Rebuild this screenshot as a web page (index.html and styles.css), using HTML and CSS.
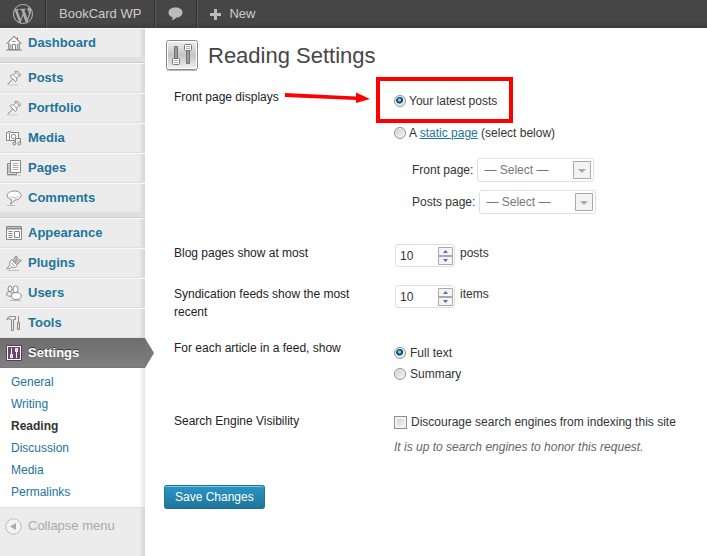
FILE: index.html
```html
<!DOCTYPE html>
<html lang="en">
<head>
<meta charset="utf-8">
<title>Reading Settings</title>
<link rel="stylesheet" href="styles.css">
</head>
<body>
<header class="bar">
  <a class="bar-item bar-logo" href="#" aria-label="WordPress"><svg width="20" height="20" viewBox="0 0 20 20" fill="#aaa"><path d="M20 10c0-5.51-4.49-10-10-10C4.48 0 0 4.49 0 10c0 5.52 4.48 10 10 10 5.51 0 10-4.48 10-10zM7.78 15.37L4.37 6.22c.55-.02 1.17-.08 1.17-.08.5-.06.44-1.13-.06-1.11 0 0-1.45.11-2.37.11-.18 0-.37 0-.58-.01C4.12 2.69 6.87 1.11 10 1.11c2.33 0 4.45.87 6.05 2.34-.68-.11-1.65.39-1.65 1.58 0 .74.45 1.36.9 2.1.35.61.55 1.36.55 2.46 0 1.49-1.4 5-1.4 5l-3.03-8.37c.54-.02.82-.17.82-.17.5-.05.44-1.25-.06-1.22 0 0-1.44.12-2.38.12-.87 0-2.33-.12-2.33-.12-.5-.03-.56 1.2-.06 1.22l.92.08 1.26 3.41zM17.41 10c.24-.64.74-1.87.43-4.25.7 1.29 1.05 2.71 1.05 4.25 0 3.29-1.73 6.24-4.4 7.78.97-2.59 1.94-5.2 2.92-7.78zM6.1 18.09C3.12 16.65 1.11 13.53 1.11 10c0-1.3.23-2.48.72-3.59C3.25 10.3 4.67 14.2 6.1 18.09zm4.03-6.63l2.58 6.98c-.86.29-1.76.45-2.71.45-.79 0-1.57-.11-2.29-.33.81-2.38 1.62-4.74 2.42-7.1z"/></svg></a>
  <a class="bar-item" href="#">BookCard WP</a>
  <a class="bar-item" href="#" aria-label="Comments"><svg width="15" height="14" viewBox="0 0 15 14" fill="#bbb"><path d="M7.500 0.500C11.500 0.500 14.500 2.500 14.500 5.500S11.500 10.500 8.500 10.500Q7 12.500 3.500 13.500Q5 12 4.500 10.200C2 9.500 0.500 7.700 0.500 5.500C0.500 2.500 3.500 0.500 7.500 0.500Z"/></svg></a>
  <a class="bar-item bar-new" href="#"><svg width="11" height="11" viewBox="0 0 11 11" fill="#bbb"><path d="M4 0h3v4h4v3H7v4H4V7H0V4h4z"/></svg>New</a>
</header>
<div class="layout">
  <nav class="side">
    <ul class="menu">
      <li><a href="#"><svg class="icon" viewBox="0 0 16 16"><path d="M.8 8.500L8 1.200l7.200 7.300M11.500 2v3M2.800 8v6.500h10.400V8" /><path d="M3 8l5-5 5 5v6H3z" fill="#fff" stroke="none"/><path d="M.8 8.500L8 1.200l7.200 7.300M3 8v6M13 8v6M6.500 14.500v-5h3v5M4.800 9v5M11.300 9v5M6.500 6.500h3M0 15h16"/></svg>Dashboard</a></li>
    </ul>
    <div class="gap"></div>
    <ul class="menu">
      <li><a href="#"><svg class="icon" viewBox="0 0 16 16"><path d="M9 1.500c2-1 5.500 1.500 5.500 4l-1.800.3-2.200 2.400c.6 2-.4 3.300-1 3.300L4 6.300c.5-1.200 2-1.600 3.500-1.200L9.300 3.300z" fill="#fff"/><path d="M6.700 9L1.500 14.500M8 5.500l2.500 2.600M10 2.500l3.500 3"/><path d="M1 15h11" stroke="#ccc"/></svg>Posts</a></li>
      <li><a href="#"><svg class="icon" viewBox="0 0 16 16"><path d="M9 1.500c2-1 5.500 1.500 5.500 4l-1.800.3-2.200 2.400c.6 2-.4 3.300-1 3.300L4 6.300c.5-1.200 2-1.600 3.500-1.200L9.300 3.300z" fill="#fff"/><path d="M6.700 9L1.500 14.500M8 5.500l2.500 2.600M10 2.500l3.500 3"/><path d="M1 15h11" stroke="#ccc"/></svg>Portfolio</a></li>
      <li><a href="#"><svg class="icon" viewBox="0 0 16 16"><path d="M.5 2.500h2v-1h2v1h8v8H.5z" fill="#fff"/><circle cx="7.500" cy="6.500" r="2.300"/><path d="M3.500 3v7"/><path d="M9.500 13.500V8.500h5v5" fill="#eee"/><ellipse cx="8.300" cy="13.500" rx="1.500" ry="1.500" fill="#ddd"/><ellipse cx="13.300" cy="13.500" rx="1.500" ry="1.500" fill="#ddd"/></svg>Media</a></li>
      <li><a href="#"><svg class="icon" viewBox="0 0 16 16"><path d="M5 3.500H1.500v11H10.500V13" fill="#ddd"/><path d="M4.500.500h10v12h-10z" fill="#fff"/><path d="M6.500 3.500h6M6.500 5.500h6M6.500 7.500h6M6.500 9.500h6M3 5v8" stroke="#aaa"/><path d="M1 15.500h14" stroke="#ccc"/></svg>Pages</a></li>
      <li><a href="#"><svg class="icon" viewBox="0 0 16 16"><path d="M8.500 1C12.500 1 15.200 3 15.200 5.500S12.300 10 8.800 10Q6.500 13 4.500 14Q5.800 11.500 5.500 9.500C2.800 8.800 1.200 7.500 1.200 5.500 1.200 3 4.500 1 8.500 1z" fill="#fff"/><path d="M3 5.500c2 2 9 2 11 0-1 4-10 4-11 0z" fill="#ccc" stroke="none"/><path d="M1 15.500h8" stroke="#bbb"/></svg>Comments</a></li>
    </ul>
    <div class="gap"></div>
    <ul class="menu">
      <li><a href="#"><svg class="icon" viewBox="0 0 16 16"><path d="M.5 1.500h15v13H.5z" fill="#fff"/><path d="M1 3.500h14" stroke-width="2"/><path d="M2.500 6.500h4M2.500 8.500h4M2.500 10.500h4M2.500 12.500h4"/><path d="M8.500 6.500h5v6h-5z"/></svg>Appearance</a></li>
      <li><a href="#"><svg class="icon" viewBox="0 0 16 16"><path d="M5.500 4.500L11.500 10.500C9.500 13 7 13 5.500 11.800L3.500 14 1.500 12.500 4 10.300C3 8.500 3.500 6.500 5.500 4.500z" fill="#fff"/><path d="M7 5.500l3-4M10.500 9l4.300-3.500M5.500 8l3 3M9 7l3-3.500M1.500 13L.5 14.500"/><path d="M7 5.500L10 1l1.500 1L8.500 6.500M9.500 8L13.500 4l1.500 1.500-4 4"/><path d="M2 15.500h11" stroke="#bbb"/></svg>Plugins</a></li>
      <li><a href="#"><svg class="icon" viewBox="0 0 16 16"><ellipse cx="4" cy="3.800" rx="2" ry="2.800" fill="#fff"/><ellipse cx="9.500" cy="4.300" rx="2.500" ry="3.500" fill="#fff"/><ellipse cx="3.500" cy="9" rx="3" ry="2.300" fill="#eee"/><ellipse cx="10.300" cy="11" rx="5" ry="3.600" fill="#fff"/><path d="M4 15.500h11" stroke="#bbb"/></svg>Users</a></li>
      <li><a href="#"><svg class="icon" viewBox="0 0 16 16"><path d="M.7 4.500Q2 1.300 5 1.500h4.500v3h-2v11h-2v-11Q3 3 .7 4.500z" fill="#eee"/><path d="M12.500 1v6M11.500 7.500h2v7h-2z" fill="#ddd"/></svg>Tools</a></li>
      <li class="current"><a href="#"><svg class="icon" viewBox="0 0 16 16"><path d="M.5.500h15v15H.5z" fill="#fff" stroke="#5b3c5c"/><path d="M2 2h12v12H2z" fill="#6b466c" stroke="none"/><path d="M5.500 3v7M10.500 6v7" stroke="#fff"/><path d="M4.500 9.500h2v3h-2zM9.500 3.500h2v3h-2z" fill="#d7bfd7" stroke="#fff"/></svg>Settings</a>
        <svg class="pointer" width="9" height="30" viewBox="0 0 9 30"><path d="M0 0l9 15-9 15z" fill="#777"/></svg></li>
    </ul>
    <ul class="submenu">
      <li><a href="#">General</a></li>
      <li><a href="#">Writing</a></li>
      <li><a class="here" href="#">Reading</a></li>
      <li><a href="#">Discussion</a></li>
      <li><a href="#">Media</a></li>
      <li><a href="#">Permalinks</a></li>
    </ul>
    <button class="collapse" type="button"><svg width="17" height="17" viewBox="0 0 17 17"><circle cx="8.500" cy="8.500" r="7.700" fill="#f3f3f3" stroke="#bbb"/><path d="M11 5v7L5 8.500z" fill="#aaa"/></svg>Collapse menu</button>
  </nav>
  <main class="main">
    <div class="title">
      <svg width="32" height="32" viewBox="0 0 32 32"><defs><linearGradient id="plate" x2="0" y2="1"><stop stop-color="#eee"/><stop offset=".5" stop-color="#c4c4c4"/><stop offset="1" stop-color="#eee"/></linearGradient></defs><rect x=".5" y=".5" width="31" height="29" rx="2" fill="#fff" stroke="#888"/><rect x="2" y="2" width="28" height="26" fill="url(#plate)"/><path d="M1 30.500h30" stroke="#bbb"/><path d="M8.500 6.500h3v17h-3zM20.500 7.500h3v16h-3z" fill="#999" stroke="#777"/><rect x="6.500" y="18.500" width="7" height="6" rx="1" fill="#fff" stroke="#777"/><rect x="18.500" y="4.500" width="7" height="6" rx="1" fill="#fff" stroke="#777"/><path d="M8 20.500h4M8 22.500h4M20 6.500h4M20 8.500h4" stroke="#aaa"/></svg>
      <h1>Reading Settings</h1>
    </div>
    <form class="form">
      <div class="row">
        <div class="name" id="front">Front page displays</div>
        <div class="field front" role="radiogroup" aria-labelledby="front">
          <label class="choice marked"><input type="radio" name="front" checked>Your latest posts</label>
          <div class="choice"><input type="radio" name="front" id="static"><label for="static">A <a href="#">static page</a> (select below)</label></div>
          <div class="picks">
            <div class="pick"><label for="fp">Front page:</label><span class="select"><select id="fp" disabled><option>— Select —</option></select><svg width="18" height="18" viewBox="0 0 18 18"><path d="M.5.500h17v17H.5z" fill="#f3f3f3" stroke="#aaa"/><path d="M5 8h8l-4 4z" fill="#aaa"/></svg></span></div>
            <div class="pick"><label for="pp">Posts page:</label><span class="select"><select id="pp" disabled><option>— Select —</option></select><svg width="18" height="18" viewBox="0 0 18 18"><path d="M.5.500h17v17H.5z" fill="#f3f3f3" stroke="#aaa"/><path d="M5 8h8l-4 4z" fill="#aaa"/></svg></span></div>
          </div>
        </div>
        <svg class="arrow" width="88" height="16" viewBox="0 0 88 16"><path d="M1 3L72 6.500V2.500L86 9 72 13V10L1 7z" fill="#f00"/></svg>
      </div>
      <div class="row">
        <label class="name" for="blog">Blog pages show at most</label>
        <div class="field count"><span class="number"><input id="blog" type="number" value="10"><svg width="15" height="18" viewBox="0 0 15 18"><path d="M.5.500h14v17H.5z" fill="#f5f5f5" stroke="#aaa"/><path d="M0 9h15" stroke="#aaa" stroke-width="2"/><path d="M5 6h5L7.500 3zM5 12h5l-2.500 3z" fill="#5468b8"/></svg></span><span>posts</span></div>
      </div>
      <div class="row">
        <label class="name" for="feed">Syndication feeds show the most recent</label>
        <div class="field count"><span class="number"><input id="feed" type="number" value="10"><svg width="15" height="18" viewBox="0 0 15 18"><path d="M.5.500h14v17H.5z" fill="#f5f5f5" stroke="#aaa"/><path d="M0 9h15" stroke="#aaa" stroke-width="2"/><path d="M5 6h5L7.500 3zM5 12h5l-2.500 3z" fill="#5468b8"/></svg></span><span>items</span></div>
      </div>
      <div class="row">
        <div class="name" id="article">For each article in a feed, show</div>
        <div class="field article" role="radiogroup" aria-labelledby="article">
          <label class="choice wide"><input type="radio" name="article" checked>Full text</label>
          <label class="choice wide"><input type="radio" name="article">Summary</label>
        </div>
      </div>
      <div class="row">
        <div class="name">Search Engine Visibility</div>
        <div class="field">
          <label class="choice wide"><input type="checkbox">Discourage search engines from indexing this site</label>
          <p class="note">It is up to search engines to honor this request.</p>
        </div>
      </div>
      <button class="save" type="submit">Save Changes</button>
    </form>
  </main>
</div>
</body>
</html>
```
FILE: styles.css
```css
* { box-sizing: border-box; }
body {
  margin: 0;
  min-height: 100vh;
  display: flex;
  flex-direction: column;
  background: #fff;
  color: #333;
  font: 12px/20px "Liberation Sans", Arial, sans-serif;
}
button, input, select { font: inherit; color: inherit; margin: 0; }
ul { margin: 0; padding: 0; list-style: none; }
svg { display: block; flex: none; }
a { color: #21759b; }

.bar {
  display: flex;
  height: 28px;
  background: linear-gradient(#464646 0 80%, #3c3c3c);
}
.bar-item {
  display: flex;
  align-items: center;
  padding: 0 13px;
  border-right: 1px solid #303030;
  box-shadow: 1px 0 #585858;
  color: #ccc;
  font-size: 13px;
  text-decoration: none;
}
.bar-item:first-child { padding-right: 12px; }
.bar-new { gap: 8px; border: 0; box-shadow: none; }

.layout { display: flex; flex: 1; }
.side {
  flex: none;
  width: 145px;
  background: linear-gradient(to left, #d4d4d4, #ececec 6px);
}
.menu li { position: relative; }
.menu a {
  display: flex;
  align-items: center;
  gap: 6px;
  height: 30px;
  padding-left: 6px;
  border-top: 1px solid #f9f9f9;
  border-bottom: 1px solid #dfdfdf;
  background: linear-gradient(to left, #d4d4d4, #ececec 6px) border-box;
  font-size: 13px;
  font-weight: bold;
  text-decoration: none;
}
.icon { width: 16px; height: 16px; fill: none; stroke: #888; }
.gap { height: 5px; background: #dfdfdf; border-bottom: 1px solid #ccc; }
.menu .current a {
  border-color: #6d6d6d #777 #777;
  background: linear-gradient(#6d6d6d, #808080);
  color: #fff;
  text-shadow: 0 -1px 0 #333;
}
.pointer { position: absolute; left: 100%; top: 0; }
.submenu {
  padding: 3px 0 4px;
  background: linear-gradient(to left, #e4e4e4, #fff 6px);
  border-bottom: 1px solid #dfdfdf;
}
.submenu a {
  display: block;
  padding-left: 11px;
  line-height: 22px;
  text-decoration: none;
}
.submenu .here { color: #333; font-weight: bold; }
.collapse {
  display: flex;
  align-items: center;
  gap: 6px;
  height: 36px;
  padding: 0 5px;
  border: 0;
  background: none;
  color: #aaa;
  font-size: 13px;
}

.main { flex: 1; min-width: 0; padding: 12px 16px 16px 19px; }
.title { display: flex; align-items: center; gap: 10px; padding-left: 2px; }
h1 { margin: 0; color: #464646; font-size: 22px; line-height: 28px; font-weight: normal; }
.form { padding-top: 16px; }
.row {
  position: relative;
  display: grid;
  grid-template-columns: 200px 1fr;
  column-gap: 20px;
  padding: 0 0 18px 10px;
}
.name { color: #222; line-height: 18px; }
.choice { display: flex; align-items: center; gap: 3px; width: max-content; }
.wide { gap: 4px; }
.front { padding: 3px 0 12px; }
.marked { position: relative; margin-bottom: 12px; }
.marked::after {
  content: "";
  position: absolute;
  inset: -14px -16px -12px -18px;
  border: 4px solid #f00;
  pointer-events: none;
}
input[type="radio"], input[type="checkbox"] {
  appearance: none;
  flex: none;
  width: 12px;
  height: 12px;
  border: 1px solid #8e8f8f;
  border-radius: 50%;
  background: linear-gradient(135deg, #ccc, #f8f8f8);
  box-shadow: inset 0 0 0 1px #f4f4f4;
}
input[type="radio"]:checked {
  background: radial-gradient(circle at 45% 40%, #7fd0f0 0 1px, #126191 2px, #0b3657 3px, #e8e8e8 4px);
}
input[type="checkbox"] { width: 13px; height: 13px; border-radius: 0; box-shadow: inset 0 0 0 2px #f4f4f4; }
.picks { display: grid; gap: 8px; padding: 15px 0 0 18px; }
.pick { display: flex; align-items: center; gap: 4px; }
.select {
  display: flex;
  align-items: center;
  width: 117px;
  height: 24px;
  padding-right: 2px;
  border: 1px solid #dfdfdf;
  border-radius: 3px;
}
select {
  appearance: none;
  flex: 1;
  min-width: 0;
  padding: 0 0 0 6px;
  border: 0;
  background: none;
}
select:disabled { color: #777; opacity: 1; }
.count { display: flex; gap: 5px; line-height: 18px; }
.number {
  display: flex;
  align-items: center;
  width: 60px;
  height: 23px;
  margin-left: 1px;
  padding-right: 1px;
  border: 1px solid #dfdfdf;
  border-radius: 3px;
}
.number input {
  appearance: textfield;
  flex: 1;
  min-width: 0;
  padding: 0 0 0 4px;
  border: 0;
  background: none;
}
.number input::-webkit-inner-spin-button { appearance: none; }
.arrow { position: absolute; left: 120px; top: 2px; }
.article { display: grid; gap: 1px; padding: 4px 0 10px; }
.note { margin: 5px 0 10px; color: #666; font-style: italic; }
.save {
  height: 24px;
  padding: 0 10px;
  border: 1px solid #21759b;
  border-bottom-color: #1e6a8d;
  border-radius: 3px;
  background: linear-gradient(#2a95c5, #21759b);
  box-shadow: inset 0 1px 0 #78c8e6;
  color: #fff;
  line-height: 20px;
}
```
